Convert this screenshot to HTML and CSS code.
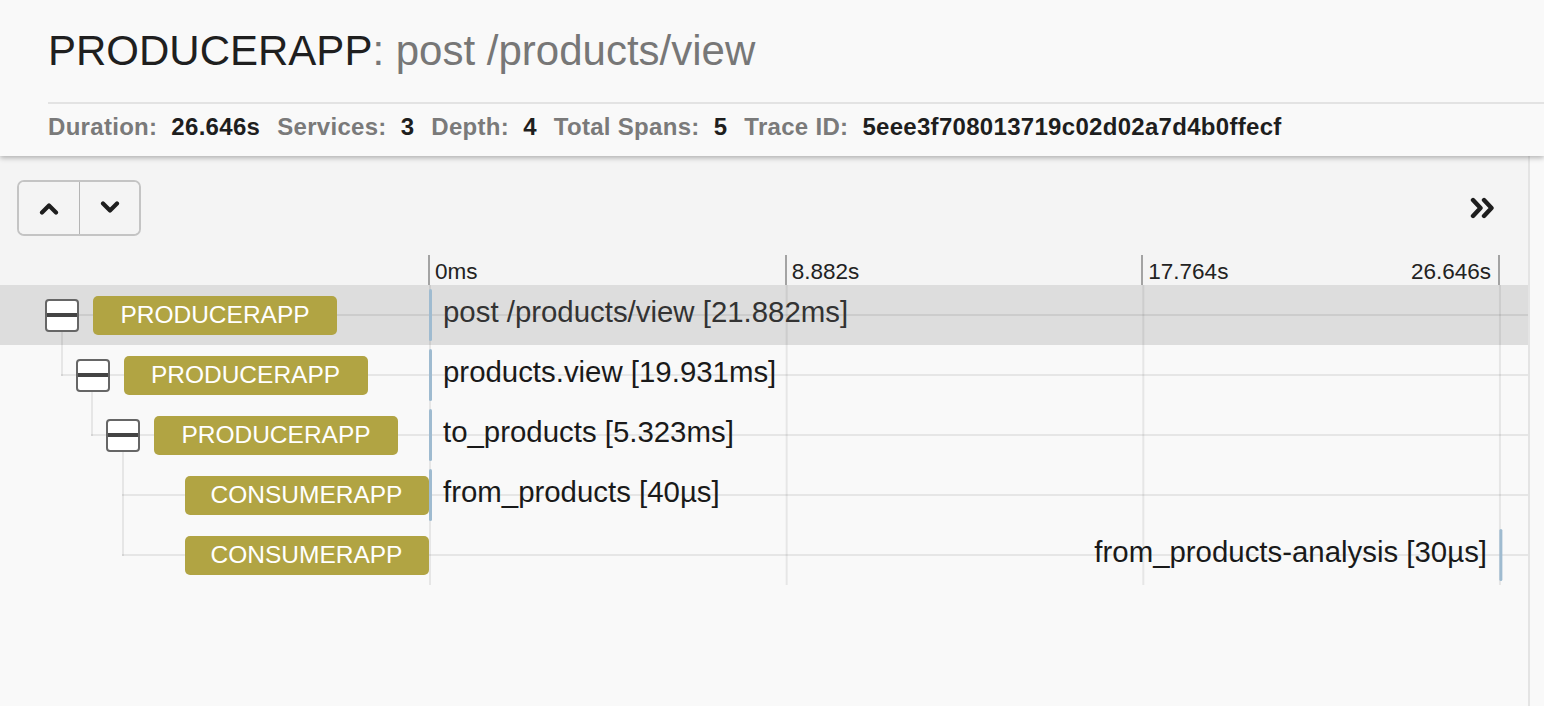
FILE: index.html
```html
<!DOCTYPE html>
<html lang="en">
<head>
<meta charset="utf-8">
<title>PRODUCERAPP: post /products/view</title>
<link rel="stylesheet" href="styles.css">
</head>
<body>
<header class="trace-header">
  <h1 class="title"><span class="svc">PRODUCERAPP</span><span class="op">: post /products/view</span></h1>
  <div class="meta">
    <span class="item"><span class="k">Duration:</span><span class="v">26.646s</span></span>
    <span class="item"><span class="k">Services:</span><span class="v">3</span></span>
    <span class="item"><span class="k">Depth:</span><span class="v">4</span></span>
    <span class="item"><span class="k">Total Spans:</span><span class="v">5</span></span>
    <span class="item"><span class="k">Trace ID:</span><span class="v">5eee3f708013719c02d02a7d4b0ffecf</span></span>
  </div>
</header>

<main class="panel">
  <div class="toolbar">
    <div class="btn-group">
      <button class="btn" type="button" aria-label="Previous">
        <svg width="20" height="14" viewBox="0 0 20 14"><path d="M3 11.5 L10 4.5 L17 11.5" fill="none" stroke="#1e1e1e" stroke-width="4.2" stroke-linecap="round" stroke-linejoin="round"/></svg>
      </button>
      <button class="btn" type="button" aria-label="Next">
        <svg width="20" height="14" viewBox="0 0 20 14"><path d="M3 2.5 L10 9.5 L17 2.5" fill="none" stroke="#1e1e1e" stroke-width="4.2" stroke-linecap="round" stroke-linejoin="round"/></svg>
      </button>
    </div>
    <button class="btn-icon" type="button" aria-label="Expand">
      <svg width="28" height="22" viewBox="0 0 28 22"><path d="M3 3 L10.5 11 L3 19 M14 3 L21.5 11 L14 19" fill="none" stroke="#1e1e1e" stroke-width="4.4" stroke-linecap="round" stroke-linejoin="round"/></svg>
    </button>
  </div>

  <div class="ticks">
    <div class="ticks-spacer"></div>
    <div class="tick-seg"><span>0ms</span></div>
    <div class="tick-seg"><span>8.882s</span></div>
    <div class="tick-seg last"><span>17.764s</span><span>26.646s</span></div>
  </div>

  <div class="rows">
    <div class="row root open selected" style="--d:0">
      <div class="tree">
        <span class="toggle"></span>
        <span class="badge">PRODUCERAPP</span>
      </div>
      <div class="lane">
        <div class="span" style="--x:0"><i class="bar"></i><span class="label">post /products/view [21.882ms]</span></div>
      </div>
    </div>

    <div class="row open last-child" style="--d:1">
      <i class="guide"></i>
      <div class="tree">
        <span class="toggle"></span>
        <span class="badge">PRODUCERAPP</span>
      </div>
      <div class="lane">
        <div class="span" style="--x:0"><i class="bar"></i><span class="label">products.view [19.931ms]</span></div>
      </div>
    </div>

    <div class="row open last-child" style="--d:2">
      <i class="guide"></i>
      <div class="tree">
        <span class="toggle"></span>
        <span class="badge">PRODUCERAPP</span>
      </div>
      <div class="lane">
        <div class="span" style="--x:0"><i class="bar"></i><span class="label">to_products [5.323ms]</span></div>
      </div>
    </div>

    <div class="row" style="--d:3">
      <i class="guide"></i>
      <div class="tree">
        <span class="toggle empty"></span>
        <span class="badge">CONSUMERAPP</span>
      </div>
      <div class="lane">
        <div class="span" style="--x:0"><i class="bar"></i><span class="label">from_products [40µs]</span></div>
      </div>
    </div>

    <div class="row last-child" style="--d:3">
      <i class="guide"></i>
      <div class="tree">
        <span class="toggle empty"></span>
        <span class="badge">CONSUMERAPP</span>
      </div>
      <div class="lane">
        <div class="span end" style="--x:1"><i class="bar"></i><span class="label">from_products-analysis [30µs]</span></div>
      </div>
    </div>
  </div>
</main>
</body>
</html>
```

FILE: styles.css
```css
* {
  box-sizing: border-box;
}

html, body {
  margin: 0;
  padding: 0;
}

body {
  width: 1544px;
  height: 706px;
  overflow: hidden;
  background: #f9f9f9;
  font-family: "Liberation Sans", Arial, Helvetica, sans-serif;
  color: #1e1e1e;
}

/* ---------- header ---------- */
.trace-header {
  position: relative;
  z-index: 2;
  background: #f9f9f9;
  padding: 27px 0 15px 48px;
  box-shadow: 0 2px 5px rgba(0, 0, 0, 0.28);
}

.title {
  margin: 0;
  font-size: 42px;
  line-height: 48px;
  font-weight: 400;
  white-space: nowrap;
}

.title .svc {
  color: #1f1f1f;
}

.title .op {
  color: #777777;
}

.meta {
  margin-top: 27px;
  padding-top: 9px;
  border-top: 2px solid #e3e3e3;
  font-size: 24px;
  line-height: 28px;
  font-weight: 700;
  letter-spacing: 0.3px;
  white-space: nowrap;
  display: flex;
}

.meta .item + .item {
  margin-left: 17px;
}

.meta .k {
  color: #7a7a7a;
}

.meta .v {
  color: #1e1e1e;
  margin-left: 14px;
}

/* ---------- panel ---------- */
.panel {
  width: 1530px;
  height: 550px;
  border-right: 2px solid #e4e4e4;
  background: #f9f9f9;
}

.toolbar {
  display: flex;
  align-items: center;
  justify-content: space-between;
  padding: 24px 30px 19px 17px;
  background: #f4f4f4;
}

.btn-group {
  display: flex;
  border: 2px solid #c4c4c4;
  border-radius: 7px;
  overflow: hidden;
}

.btn {
  width: 60px;
  height: 52px;
  padding: 0;
  margin: 0;
  border: 0;
  background: #f4f4f4;
  display: flex;
  align-items: center;
  justify-content: center;
}

.btn + .btn {
  border-left: 1px solid #b4b4b4;
}

.btn-icon {
  padding: 0;
  margin: 0;
  border: 0;
  background: transparent;
  display: flex;
}

/* ---------- ticks ---------- */
.ticks {
  display: flex;
  height: 30px;
  background: #f4f4f4;
  font-size: 22.5px;
  line-height: 30px;
  color: #222222;
}

.ticks-spacer {
  flex: 0 0 428px;
}

.tick-seg {
  flex: 0 0 356.67px;
  border-left: 2px solid #a3a3a3;
  padding: 2px 0 0 5px;
  display: flex;
  justify-content: space-between;
  white-space: nowrap;
}

.tick-seg.last {
  flex-basis: 358.67px;
  border-right: 2px solid #a3a3a3;
  padding-right: 7px;
}

/* ---------- rows ---------- */
.rows {
  width: 1528px;
}

.row {
  --lx: calc(60.5px + (var(--d) - 1) * 30.5px);
  position: relative;
  display: flex;
  height: 60px;
}

.row.selected {
  background: #dddddd;
}

/* mid horizontal line */
.row::before {
  content: "";
  position: absolute;
  left: var(--lx);
  right: 0;
  top: 29px;
  height: 2px;
  background: rgba(0, 0, 0, 0.075);
}

.row.root::before {
  left: 45px;
}

/* line down from an expanded toggle */
.row.open::after {
  content: "";
  position: absolute;
  left: calc(60.5px + var(--d) * 30.5px);
  top: 47px;
  bottom: 0;
  width: 2px;
  background: rgba(0, 0, 0, 0.075);
}

/* line from parent */
.guide {
  position: absolute;
  left: var(--lx);
  top: 0;
  bottom: 0;
  width: 2px;
  background: rgba(0, 0, 0, 0.075);
}

.row.last-child .guide {
  bottom: 29px;
}

.tree {
  position: relative;
  z-index: 1;
  flex: 0 0 429px;
  display: flex;
  align-items: center;
  padding-left: calc(45px + var(--d) * 30.5px);
}

.toggle {
  flex: 0 0 34px;
  height: 33px;
  border: 2px solid #666666;
  border-radius: 4px;
  background: #ffffff;
  display: flex;
  align-items: center;
}

.toggle::after {
  content: "";
  display: block;
  width: 100%;
  height: 4px;
  background: #444444;
}

.toggle.empty {
  visibility: hidden;
}

.badge {
  margin-left: 14px;
  flex: 0 0 244px;
  height: 39px;
  border-radius: 5px;
  background: #b1a443;
  color: #ffffff;
  font-size: 24.5px;
  display: flex;
  align-items: center;
  justify-content: center;
  white-space: nowrap;
}

.lane {
  position: relative;
  flex: 1 1 auto;
  background-image: linear-gradient(to right, rgba(0, 0, 0, 0.075) 2px, transparent 2px);
  background-size: 356.67px 100%;
  background-repeat: repeat-x;
}

.span {
  position: absolute;
  top: 0;
  bottom: 0;
  left: calc(var(--x) * 1070px);
  display: flex;
  align-items: flex-start;
  z-index: 1;
}

.bar {
  flex: 0 0 3px;
  height: 52px;
  margin-top: 4px;
  border-radius: 2px;
  background: #9fbbd0;
}

.label {
  margin-left: 11px;
  padding-top: 9px;
  font-size: 29.4px;
  line-height: 36px;
  color: #1a1a1a;
  white-space: nowrap;
}

.row.selected .label {
  color: #333333;
}

.span.end {
  flex-direction: row-reverse;
  transform: translateX(calc(-100% + 3px));
}

.span.end .label {
  margin-left: 0;
  margin-right: 12px;
}
```
